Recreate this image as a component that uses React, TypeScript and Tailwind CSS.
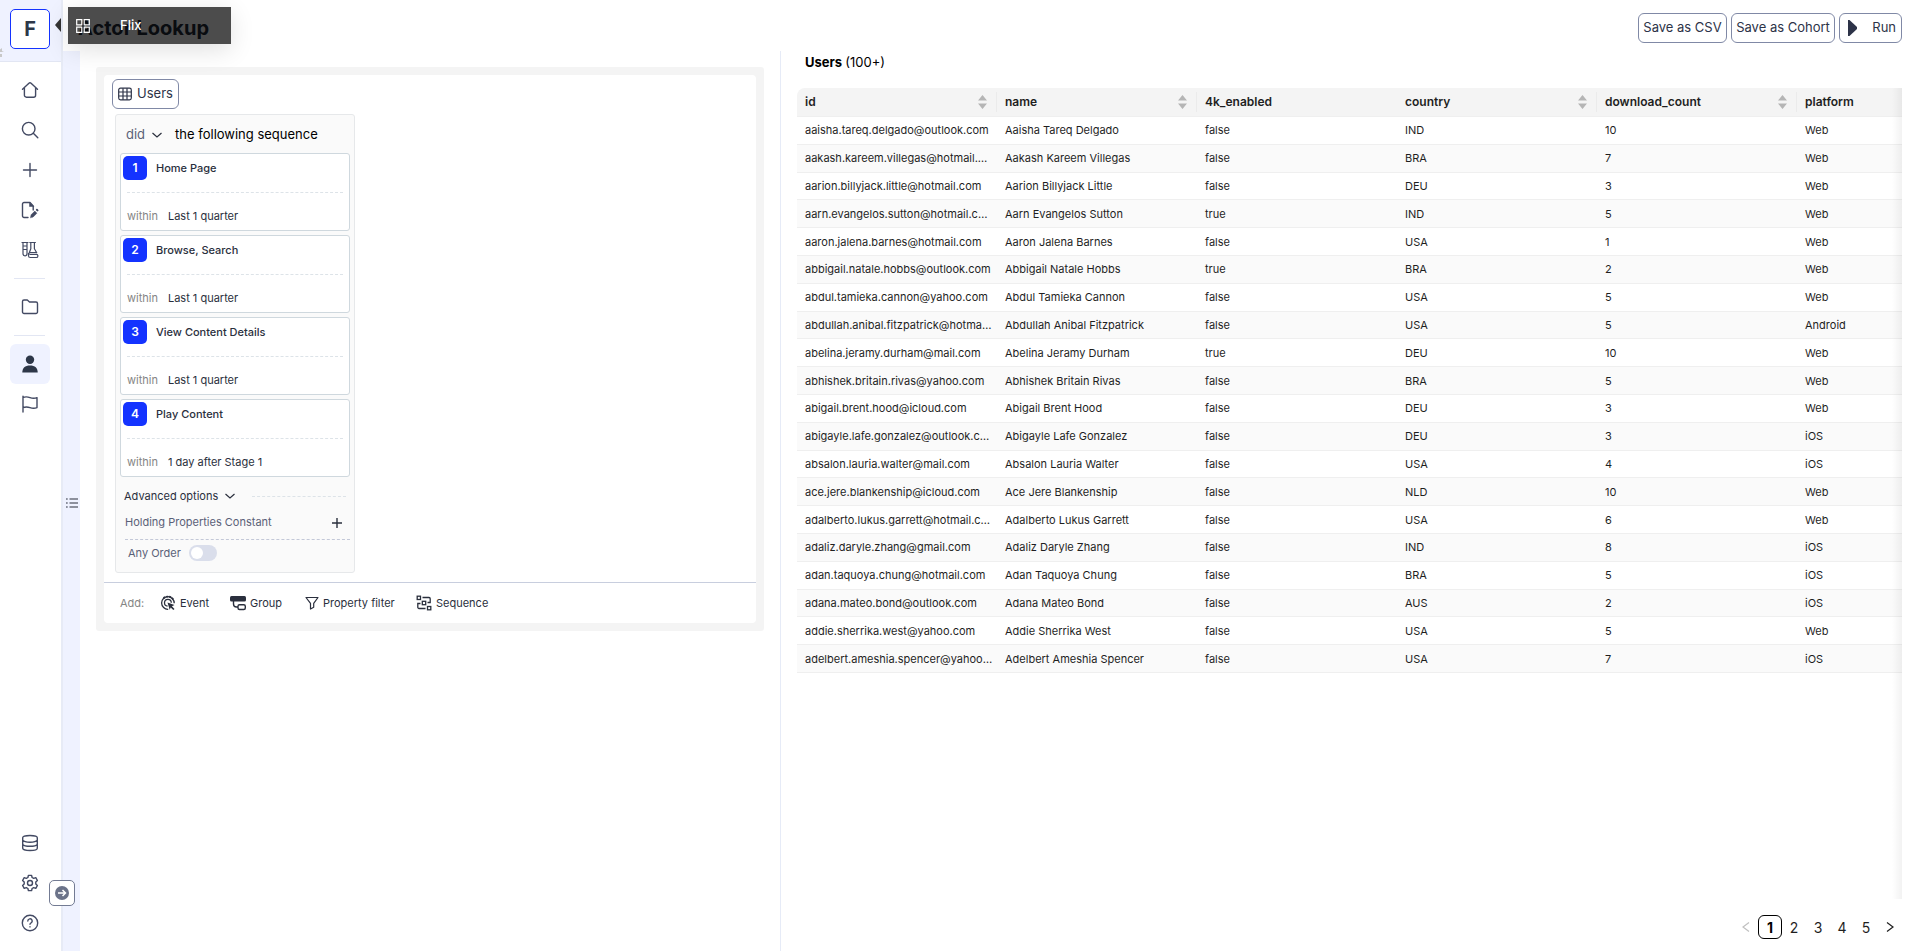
import React, { ReactNode } from "react";

type User = [string, string, string, string, number, string];

const columns = [
  { label: "id", sortable: true },
  { label: "name", sortable: true },
  { label: "4k_enabled", sortable: false },
  { label: "country", sortable: true },
  { label: "download_count", sortable: true },
  { label: "platform", sortable: false },
];

const users: User[] = [
  ["aaisha.tareq.delgado@outlook.com", "Aaisha Tareq Delgado", "false", "IND", 10, "Web"],
  ["aakash.kareem.villegas@hotmail.com", "Aakash Kareem Villegas", "false", "BRA", 7, "Web"],
  ["aarion.billyjack.little@hotmail.com", "Aarion Billyjack Little", "false", "DEU", 3, "Web"],
  ["aarn.evangelos.sutton@hotmail.com", "Aarn Evangelos Sutton", "true", "IND", 5, "Web"],
  ["aaron.jalena.barnes@hotmail.com", "Aaron Jalena Barnes", "false", "USA", 1, "Web"],
  ["abbigail.natale.hobbs@outlook.com", "Abbigail Natale Hobbs", "true", "BRA", 2, "Web"],
  ["abdul.tamieka.cannon@yahoo.com", "Abdul Tamieka Cannon", "false", "USA", 5, "Web"],
  ["abdullah.anibal.fitzpatrick@hotmail.com", "Abdullah Anibal Fitzpatrick", "false", "USA", 5, "Android"],
  ["abelina.jeramy.durham@mail.com", "Abelina Jeramy Durham", "true", "DEU", 10, "Web"],
  ["abhishek.britain.rivas@yahoo.com", "Abhishek Britain Rivas", "false", "BRA", 5, "Web"],
  ["abigail.brent.hood@icloud.com", "Abigail Brent Hood", "false", "DEU", 3, "Web"],
  ["abigayle.lafe.gonzalez@outlook.com", "Abigayle Lafe Gonzalez", "false", "DEU", 3, "iOS"],
  ["absalon.lauria.walter@mail.com", "Absalon Lauria Walter", "false", "USA", 4, "iOS"],
  ["ace.jere.blankenship@icloud.com", "Ace Jere Blankenship", "false", "NLD", 10, "Web"],
  ["adalberto.lukus.garrett@hotmail.com", "Adalberto Lukus Garrett", "false", "USA", 6, "Web"],
  ["adaliz.daryle.zhang@gmail.com", "Adaliz Daryle Zhang", "false", "IND", 8, "iOS"],
  ["adan.taquoya.chung@hotmail.com", "Adan Taquoya Chung", "false", "BRA", 5, "iOS"],
  ["adana.mateo.bond@outlook.com", "Adana Mateo Bond", "false", "AUS", 2, "iOS"],
  ["addie.sherrika.west@yahoo.com", "Addie Sherrika West", "false", "USA", 5, "Web"],
  ["adelbert.ameshia.spencer@yahoo.com", "Adelbert Ameshia Spencer", "false", "USA", 7, "iOS"],
];

const stages = [
  { title: "Home Page", when: "Last 1 quarter" },
  { title: "Browse, Search", when: "Last 1 quarter" },
  { title: "View Content Details", when: "Last 1 quarter" },
  { title: "Play Content", when: "1 day after Stage 1" },
];

function Icon({ children, className = "size-[18px]", width = 1.4 }: { children: ReactNode; className?: string; width?: number }) {
  return (
    <svg viewBox="0 0 18 18" className={className} fill="none" stroke="currentColor" strokeWidth={width} strokeLinecap="round" strokeLinejoin="round" aria-hidden="true">
      {children}
    </svg>
  );
}

const HomeIcon = () => (
  <Icon>
    <path d="M1.500 8.200 7.900 2.300a1.600 1.600 0 0 1 2.200 0l6.400 5.900M3.400 7v7.200a2 2 0 0 0 2 2h7.200a2 2 0 0 0 2-2V7" />
  </Icon>
);
const SearchIcon = () => (
  <Icon>
    <circle cx="7.700" cy="7.700" r="6.300" />
    <path d="m12.300 12.300 4.500 4.500" />
  </Icon>
);
const PlusIcon = () => (
  <Icon>
    <path d="M9 2.500v13M2.500 9h13" />
  </Icon>
);
const DraftIcon = () => (
  <Icon>
    <path d="M7 16.500H3A1.500 1.500 0 0 1 1.500 15V3A1.500 1.500 0 0 1 3 1.500h6L12.200 5v4" />
    <path d="M8.500 1.500V5.500h4z" fill="currentColor" strokeWidth="0.500" />
    <path d="m9.500 16.500.6-2.700 3.700-3.700 2.100 2.100-3.700 3.700z" fill="currentColor" strokeWidth="0.500" />
    <path d="m15.900 8.800.6.600" strokeWidth="2" />
  </Icon>
);
const LabIcon = () => (
  <Icon width={1.2}>
    <path d="M1 1.500h6M2 1.500v11.300a2 2 0 0 0 4 0V1.500M2 5h4M2 8.500h4M8.800 1.500h5.600M9.800 1.500v6.200l-2.300 6M13.400 1.500v6.200l2.300 4M8.500 11.500h7.200M7.500 12.500v2.200a1.800 1.800 0 0 0 1.800 1.800h6a1.600 1.600 0 0 0 0-3.200H9" />
  </Icon>
);
const FolderIcon = () => (
  <Icon>
    <path d="M1.500 14V3.500A1.500 1.500 0 0 1 3 2h3.300l2.200 2H15a1.500 1.500 0 0 1 1.500 1.500V14a1.500 1.500 0 0 1-1.500 1.500H3A1.500 1.500 0 0 1 1.500 14z" />
  </Icon>
);
const PersonIcon = () => (
  <svg viewBox="0 0 18 18" className="size-[18px]" fill="currentColor" aria-hidden="true">
    <circle cx="9" cy="4.700" r="4.200" />
    <path d="M1.300 17.500c0-4.500 2.700-7 7.700-7s7.700 2.500 7.700 7z" />
  </svg>
);
const FlagIcon = () => (
  <Icon>
    <path d="M2 17V1.200M2 2.500c2.500-1 4.500-.8 7 .1s4.500 1 7 0v10c-2.500 1-4.500.9-7 0s-4.500-1-7 0" />
  </Icon>
);
const DatabaseIcon = () => (
  <Icon>
    <path d="M1.700 3.700c0-1.300 3.200-2.200 7.300-2.200s7.300.9 7.300 2.200v10.600c0 1.300-3.200 2.200-7.300 2.200s-7.300-.9-7.300-2.200zM1.700 6.200C2.700 7.700 5.500 8.300 9 8.300s6.300-.6 7.300-2.100M1.700 10.300c1 1.400 3.800 2 7.300 2s6.300-.6 7.300-2" />
  </Icon>
);
const GearIcon = () => (
  <Icon>
    <path d="M7.400 1.400h3.200l.5 2.100 1.600.9 2.100-.7 1.600 2.800-1.600 1.500v2l1.600 1.500-1.600 2.800-2.100-.7-1.600.9-.5 2.100H7.400l-.5-2.100-1.600-.9-2.100.7-1.600-2.800L3.200 10V8L1.600 6.500l1.600-2.800 2.100.7 1.600-.9z" />
    <circle cx="9" cy="9" r="2.500" />
  </Icon>
);
const HelpIcon = () => (
  <Icon>
    <circle cx="9" cy="9" r="7.700" />
    <path d="M6.800 7a2.200 2.200 0 1 1 3.300 1.900C9.300 9.300 9 9.700 9 10.300M9 12.700v.2" />
  </Icon>
);
const ChevronDown = () => (
  <svg viewBox="0 0 12 12" className="size-3 shrink-0" fill="none" stroke="#2a2f3d" strokeWidth="1.200" aria-hidden="true">
    <path d="m1.500 4 4.500 4 4.500-4" />
  </svg>
);
const GridIcon = () => (
  <svg viewBox="0 0 14 14" className="size-[14px]" fill="none" stroke="currentColor" strokeWidth="1.200" aria-hidden="true">
    <rect x="0.700" y="1.200" width="12.600" height="11.600" rx="1.800" />
    <path d="M.7 5h12.600M.7 9h12.600M5 1.200v11.600M9 1.200v11.600" />
  </svg>
);
const EventIcon = () => (
  <svg viewBox="0 0 16 16" className="size-4" fill="none" stroke="currentColor" strokeWidth="1.300" aria-hidden="true">
    <path d="M14.200 8.300a6.300 6.300 0 1 0-6 6M11.300 7.700a3.400 3.400 0 1 0-3.700 3.500" />
    <path d="M3.500 3.200a6.300 6.300 0 0 1 10 2" strokeWidth="1.800" strokeDasharray="2 1" />
    <path d="m7.500 7.500 7 2.500-2.600 1.200 2.600 2.700-1.200 1.200-2.600-2.700-1 2.400z" fill="currentColor" stroke="none" />
  </svg>
);
const GroupIcon = () => (
  <svg viewBox="0 0 16 16" className="size-4" fill="none" stroke="currentColor" strokeWidth="1.400" aria-hidden="true">
    <rect x="0" y="1" width="16" height="5.500" rx="1.500" fill="currentColor" stroke="none" />
    <path d="M3.500 6v3a3 3 0 0 0 3 3H8" />
    <rect x="8" y="9.700" width="7.300" height="4.800" rx="1.500" />
  </svg>
);
const FilterIcon = () => (
  <svg viewBox="0 0 14 14" className="size-[14px]" fill="none" stroke="currentColor" strokeWidth="1.200" strokeLinejoin="round" aria-hidden="true">
    <path d="M1 1.500h12L8.700 7.300v3.900L5.500 13V7.300z" />
  </svg>
);
const SequenceIcon = () => (
  <svg viewBox="0 0 16 16" className="size-4" fill="none" stroke="currentColor" strokeWidth="1.300" aria-hidden="true">
    <rect x="1.200" y="1.200" width="3.300" height="3.300" />
    <rect x="6.300" y="6.300" width="3.400" height="3.400" />
    <rect x="11.500" y="11.500" width="3.300" height="3.300" />
    <path d="M6.500 2.500H13a1.200 1.200 0 0 1 1.200 1.200V7.500H11.500M9.500 13.500H3a1.200 1.200 0 0 1-1.200-1.200V8.500H4.500" />
  </svg>
);

function NavLink({ label, active, children }: { label: string; active?: boolean; children: ReactNode }) {
  return (
    <a
      href="#"
      aria-label={label}
      className={active ? "flex size-10 items-center justify-center rounded-md bg-[#eff2ff] text-[#2d3748]" : "flex size-10 items-center justify-center text-[#434a63]"}
    >
      {children}
    </a>
  );
}

function Sidebar() {
  return (
    <nav className="relative flex w-[63px] shrink-0 flex-col border-r-2 border-[#e7ebf6] bg-white">
      <div className="flex h-[62px] shrink-0 border-b border-[#e2e6f3] bg-[#eff2ff] pt-[9px] pl-[10px]">
        <button className="size-10 rounded-[5px] border border-[#1433ff] bg-white text-xl font-bold text-[#2d3748]">F</button>
      </div>
      <svg viewBox="0 0 4 10" className="absolute top-12 left-0 h-[10px] w-1" aria-hidden="true">
        <path d="M0 1.500 2 0v3l2 1H0zM0 6h2v3H0z" fill="#c8c8c8" />
      </svg>
      <svg viewBox="0 0 6 14" className="absolute top-[18px] right-0 h-[14px] w-[6px]" aria-hidden="true">
        <path d="M6 0v14L0 7z" fill="#333" />
      </svg>
      <div className="flex flex-col items-start pt-2 pl-[10px]">
        <NavLink label="Home"><HomeIcon /></NavLink>
        <NavLink label="Search"><SearchIcon /></NavLink>
        <NavLink label="New"><PlusIcon /></NavLink>
        <NavLink label="Drafts"><DraftIcon /></NavLink>
        <NavLink label="Experiments"><LabIcon /></NavLink>
        <hr className="my-2 ml-1 w-[31px] border-[#e2e6f3]" />
        <NavLink label="Files"><FolderIcon /></NavLink>
        <hr className="my-2 ml-1 w-[31px] border-[#e2e6f3]" />
        <NavLink label="Actors" active><PersonIcon /></NavLink>
        <NavLink label="Flags"><FlagIcon /></NavLink>
      </div>
      <div className="mt-auto flex flex-col items-start pb-2 pl-[10px]">
        <NavLink label="Data"><DatabaseIcon /></NavLink>
        <NavLink label="Settings"><GearIcon /></NavLink>
        <NavLink label="Help"><HelpIcon /></NavLink>
      </div>
      <button aria-label="Expand sidebar" className="absolute -right-[14px] bottom-[45px] z-10 flex size-[26px] items-center justify-center rounded-[5px] border border-[#737b93] bg-white">
        <svg viewBox="0 0 14 14" className="size-[14px]" aria-hidden="true">
          <circle cx="7" cy="7" r="7" fill="#6b7389" />
          <path d="M3 7h7M7.500 4l3 3-3 3" stroke="#fff" strokeWidth="1.500" fill="none" />
        </svg>
      </button>
    </nav>
  );
}

const outlined = "flex h-[30px] items-center rounded-md border border-[#8089a6] bg-white text-[13px] text-[#2d3348]";

function Header() {
  return (
    <header className="relative flex h-[51px] shrink-0 items-center justify-between bg-white pr-3 pl-[15px]">
      <h1 className="pt-1 text-[20px] font-bold text-[#1f2937]">Actor Lookup</h1>
      <div className="absolute top-[7px] left-[5px] z-20 flex h-[37px] w-[163px] items-center gap-[30px] bg-black/70 pl-2 text-[13px] text-white shadow-[0_6px_24px_rgba(0,0,0,0.12)]">
        <svg viewBox="0 0 14 14" className="size-[14px]" fill="none" stroke="currentColor" strokeWidth="1.200" aria-hidden="true">
          <path d="M.7.700h5.100v5.100H.7zM8.200.700h5.100v5.100H8.200zM.7 8.200h5.100v5.100H.7zM8.200 8.200h5.100v5.100H8.200z" />
        </svg>
        <span className="font-medium">Flix</span>
      </div>
      <div className="flex gap-1 pt-1">
        <button className={`${outlined} w-[89px] justify-center`}>Save as CSV</button>
        <button className={`${outlined} w-[104px] justify-center`}>Save as Cohort</button>
        <button className={`${outlined} w-[63px] justify-between pr-[5px] pl-2`}>
          <svg viewBox="0 0 9 16" className="h-4 w-[9px]" fill="currentColor" aria-hidden="true">
            <path d="M0 0h1.500L9 7v2l-7.500 7H0z" />
          </svg>
          Run
        </button>
      </div>
    </header>
  );
}

function Stage({ index, title, when }: { index: number; title: string; when: string }) {
  return (
    <li className="flex h-[78px] flex-col rounded-[3px] border border-[#cfd8de] bg-white p-[2px] text-[11px] text-[#2a2f3d]">
      <div className="flex items-center gap-[9px]">
        <span className="flex size-6 items-center justify-center rounded-[5px] bg-[#1433ff] text-[12px] font-semibold text-white">{index}</span>
        <span className="font-medium">{title}</span>
      </div>
      <div className="mx-1 mt-3 border-t border-dashed border-[#dde3e8]" />
      <div className="mt-[14px] flex gap-[10px] pl-1 leading-[18px]">
        <span className="text-[#858585]">within</span>
        <span>{when}</span>
      </div>
    </li>
  );
}

function QueryBuilder() {
  return (
    <section className="min-w-0 pt-4 pr-4 pl-4">
      <div className="rounded-[3px] bg-[#f4f4f4] p-2">
        <div className="rounded-[4px] bg-white">
          <div className="flex flex-col items-start px-2 pt-1 pb-[9px]">
            <button className={`${outlined} w-[67px] justify-center gap-[5px]`}>
              <GridIcon />
              Users
            </button>
            <div className="mt-[5px] ml-[3px] w-[240px] rounded-[3px] border border-[#e6e8ea] bg-[#fafafa] px-1 pb-[10px]">
              <div className="flex h-[38px] items-center pt-[2px] pl-[6px] text-[13px] text-black">
                <button className="flex items-center gap-[6px] text-[#5a6178]">
                  did <ChevronDown />
                </button>
                <span className="pl-3">the following sequence</span>
              </div>
              <ol className="flex flex-col gap-1">
                {stages.map((s, i) => (
                  <Stage key={s.title} index={i + 1} {...s} />
                ))}
              </ol>
              <div className="mt-[10px] flex h-[18px] items-center pr-1 pl-1 text-[11px] text-[#2a2f3d]">
                <button className="flex items-center gap-[6px]">
                  Advanced options <ChevronDown />
                </button>
                <span className="ml-4 flex-1 border-t border-dashed border-[#dde3e8]" />
              </div>
              <div className="mt-[5px] ml-[5px] flex h-[30px] items-center justify-between border-b border-dashed border-[#c3c8d8] pr-2 pb-1 text-[11px] text-[#5a6178]">
                Holding Properties Constant
                <button aria-label="Add property" className="text-[#2a2f3d]">
                  <svg viewBox="0 0 10 10" className="size-[10px]" stroke="currentColor" strokeWidth="1.400" aria-hidden="true">
                    <path d="M5 0v10M0 5h10" />
                  </svg>
                </button>
              </div>
              <label className="mt-1 flex h-[18px] items-center gap-2 pl-2 text-[11px] text-[#5a6178]">
                Any Order
                <input
                  type="checkbox"
                  role="switch"
                  className="flex h-4 w-7 appearance-none items-center rounded-full bg-[#dadeeb] before:ml-[2px] before:size-3 before:rounded-full before:bg-white before:content-[''] checked:justify-end checked:bg-[#1433ff]"
                />
              </label>
            </div>
          </div>
          <div className="flex h-[41px] items-center border-t border-[#c8cede] pl-4 text-[11px] text-[#2a2f3d]">
            <span className="w-10 text-[#858585]">Add:</span>
            <button className="flex w-[70px] items-center gap-1"><EventIcon />Event</button>
            <button className="flex w-[75px] items-center gap-1"><GroupIcon />Group</button>
            <button className="flex w-[111px] items-center gap-1"><FilterIcon />Property filter</button>
            <button className="flex items-center gap-1"><SequenceIcon />Sequence</button>
          </div>
        </div>
      </div>
    </section>
  );
}

function Results() {
  return (
    <section className="flex min-w-0 flex-col border-l border-[#e6ebf7] pr-3 pl-4">
      <h2 className="pt-px pl-2 text-[13px] leading-[20px] font-bold text-black">
        Users <span className="font-normal">(100+)</span>
      </h2>
      <div className="relative mt-4 min-h-0 flex-1 overflow-hidden rounded-tl-lg">
        <table className="h-[585px] w-[1200px] table-fixed border-separate border-spacing-0 text-left text-[11px] leading-[18px] text-[#1f1f1f]">
          <thead>
            <tr>
              {columns.map((c) => (
                <th key={c.label} className="h-[29px] border-b border-[#efefef] bg-[#f4f4f4] p-0 text-[12px] font-semibold">
                  <div className={c.sortable ? "flex h-5 items-center justify-between border-r border-[#ebebeb] pr-[9px] pl-2" : "flex h-5 items-center pl-2"}>
                    {c.label}
                    {c.sortable && (
                      <svg viewBox="0 0 9 14" className="h-[14px] w-[9px]" fill="#b5b5b5" aria-hidden="true">
                        <path d="M4.500 0 9 5.500H0zM4.500 14 9 8.500H0z" />
                      </svg>
                    )}
                  </div>
                </th>
              ))}
            </tr>
          </thead>
          <tbody>
            {users.map((u) => (
              <tr key={u[0]} className="even:bg-[#fafafa]">
                {u.map((v, i) => (
                  <td key={i} className="truncate border-b border-[#efefef] py-1 pr-1 pl-2">{v}</td>
                ))}
              </tr>
            ))}
          </tbody>
        </table>
        <div className="pointer-events-none absolute inset-y-0 right-0 w-[10px] bg-linear-to-l from-black/5 to-transparent" />
      </div>
      <nav aria-label="Pages" className="flex h-[52px] shrink-0 items-center justify-end pt-1 text-[14px] text-[#1f1f1f]">
        <button aria-label="Previous page" disabled className="flex size-6 items-center justify-center text-[#c0c0c0]">
          <svg viewBox="0 0 8 12" className="h-3 w-2" fill="none" stroke="currentColor" strokeWidth="1.200" aria-hidden="true"><path d="M7 1.500 1 6l6 4.500" /></svg>
        </button>
        <button aria-current="page" className="size-6 rounded-md border border-black font-bold text-black">1</button>
        {[2, 3, 4, 5].map((n) => (
          <button key={n} className="size-6">{n}</button>
        ))}
        <button aria-label="Next page" className="flex size-6 items-center justify-center">
          <svg viewBox="0 0 8 12" className="h-3 w-2" fill="none" stroke="currentColor" strokeWidth="1.200" aria-hidden="true"><path d="m1 1.500 6 4.500-6 4.500" /></svg>
        </button>
      </nav>
    </section>
  );
}

export default function App() {
  return (
    <div className="flex h-screen bg-white font-['Inter',sans-serif]">
      <Sidebar />
      <div className="flex min-w-0 flex-1 flex-col">
        <Header />
        <div className="flex min-h-0 flex-1">
          <aside className="flex w-[17px] shrink-0 items-center justify-center bg-[#eff2ff] pt-1 text-[#2a2f3d]">
            <button aria-label="Show list">
              <svg viewBox="0 0 12 10" className="h-[10px] w-3" stroke="currentColor" strokeWidth="1.200" aria-hidden="true">
                <path d="M3.500 1H12M3.500 5H12M3.500 9H12M0 1h1.700M0 5h1.700M0 9h1.700" />
              </svg>
            </button>
          </aside>
          <main className="grid min-w-0 flex-1 grid-cols-[700fr_1134fr]">
            <QueryBuilder />
            <Results />
          </main>
        </div>
      </div>
    </div>
  );
}
